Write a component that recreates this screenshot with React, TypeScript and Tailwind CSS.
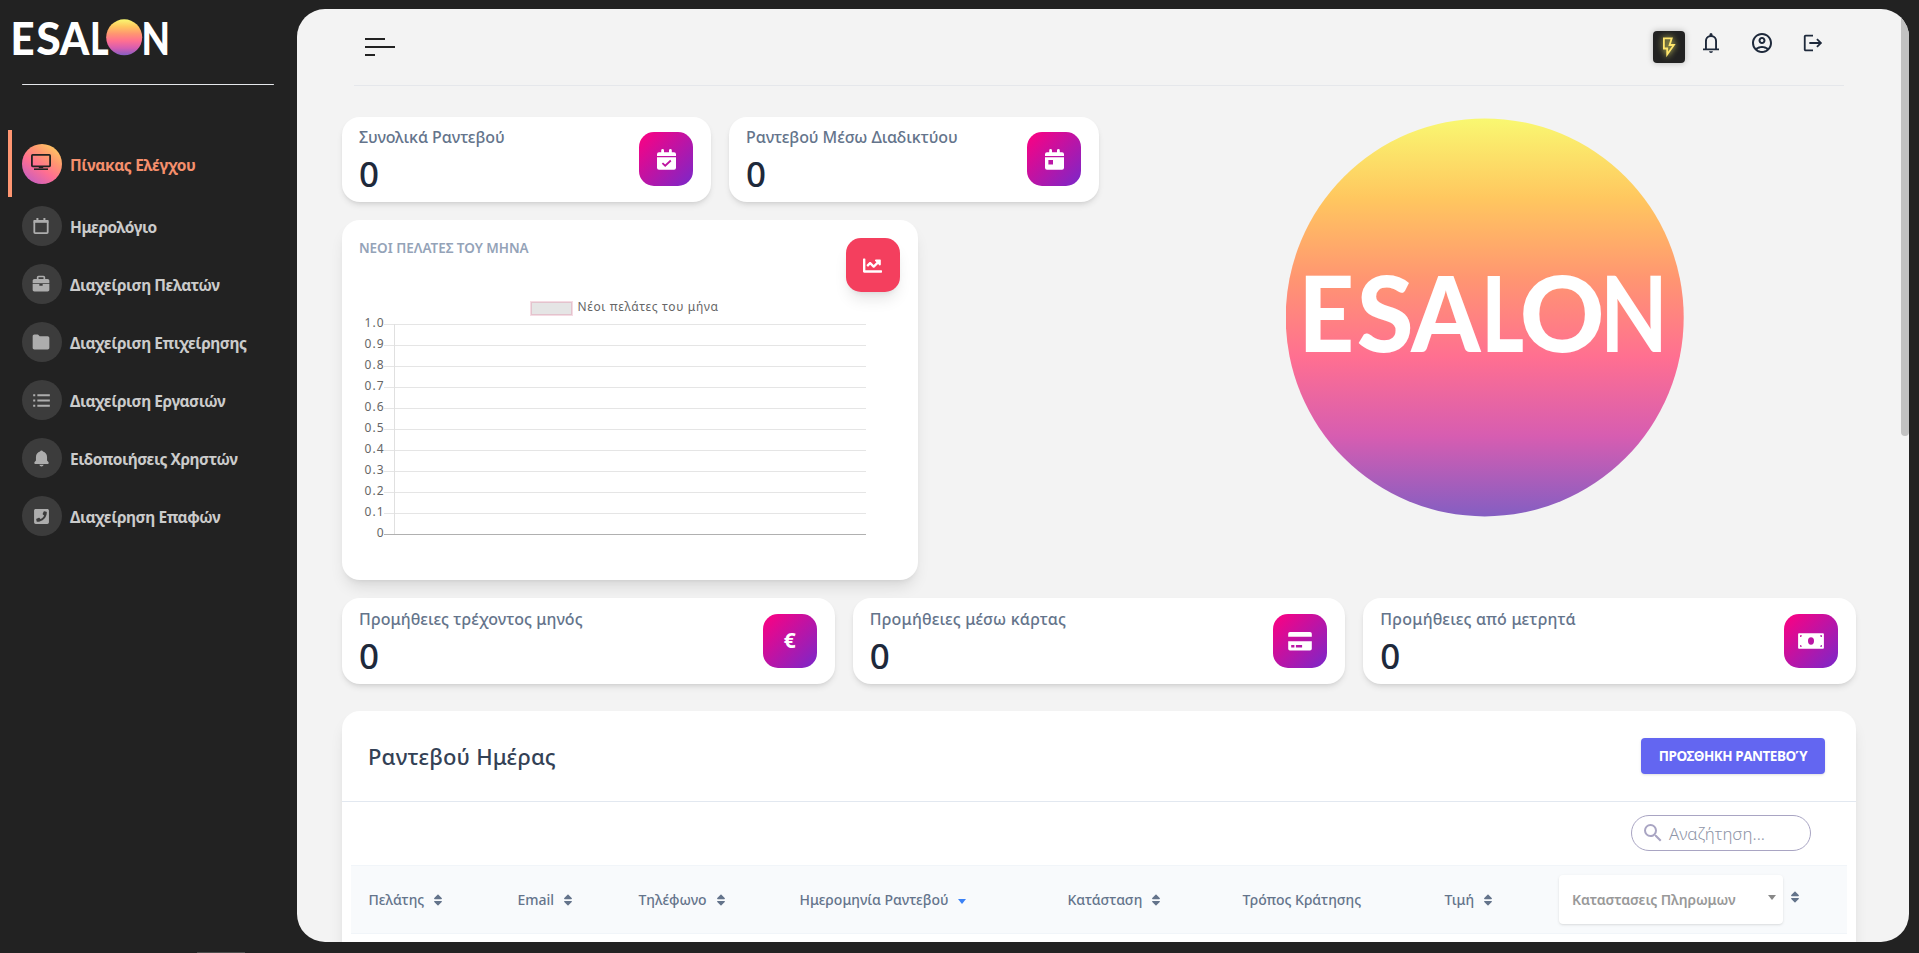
import React from "react";
import { BiSolidBriefcase, BiSolidFolder, BiListUl, BiSolidBell } from "react-icons/bi";
import { FaChartLine, FaPhoneSquare, FaSort } from "react-icons/fa";
import { MdLogout, MdOutlineAccountCircle, MdSearch } from "react-icons/md";

/* ---------- brand mark ---------- */

type Glyph = { ch: string; x: number; w: number; weight: number };

const measurer = document.createElement("canvas").getContext("2d")!;

/** Sets one letter so that its ink spans exactly w by h, with its foot on the baseline. */
function LogoGlyph({ glyph, h, baseline }: { glyph: Glyph; h: number; baseline: number }) {
  measurer.font = `${glyph.weight} 100px Lato`;
  const m = measurer.measureText(glyph.ch);
  const ink = m.actualBoundingBoxRight + m.actualBoundingBoxLeft;
  const sx = glyph.w / ink;
  const sy = h / measurer.measureText("E").actualBoundingBoxAscent;
  const tx = glyph.x + m.actualBoundingBoxLeft * sx;
  return (
    <text transform={`translate(${tx} ${baseline}) scale(${sx} ${sy})`} fontFamily="Lato, sans-serif" fontWeight={glyph.weight} fontSize={100} fill="#fff">
      {glyph.ch}
    </text>
  );
}

function SunGradient({ id }: { id: string }) {
  return (
    <linearGradient id={id} x1="0" y1="0" x2="0" y2="1">
      <stop offset="0" stopColor="#f9f871" />
      <stop offset="0.2" stopColor="#ffc75f" />
      <stop offset="0.4" stopColor="#ff9671" />
      <stop offset="0.6" stopColor="#ff6f91" />
      <stop offset="0.8" stopColor="#d65db1" />
      <stop offset="1" stopColor="#845ec2" />
    </linearGradient>
  );
}

const bigGlyphs: Glyph[] = [
  { ch: "E", x: 19.4, w: 45.5, weight: 900 },
  { ch: "S", x: 71.7, w: 52.6, weight: 900 },
  { ch: "A", x: 124.3, w: 71.9, weight: 900 },
  { ch: "L", x: 201.2, w: 35.8, weight: 900 },
  { ch: "O", x: 236.8, w: 78.4, weight: 900 },
  { ch: "N", x: 321, w: 53.8, weight: 700 },
];

function BigLogo() {
  return (
    <svg width="399" height="399" viewBox="0 0 399 399">
      <defs><SunGradient id="sun-big" /></defs>
      <circle cx="198.700" cy="199.400" r="199" fill="url(#sun-big)" />
      {bigGlyphs.map((g) => <LogoGlyph key={g.ch} glyph={g} h={75.3} baseline={233.8} />)}
    </svg>
  );
}

const smallGlyphs: Glyph[] = [
  { ch: "E", x: 9.5, w: 19.7, weight: 900 },
  { ch: "S", x: 32.6, w: 22.7, weight: 900 },
  { ch: "A", x: 55.3, w: 30.8, weight: 900 },
  { ch: "L", x: 88.6, w: 15.7, weight: 900 },
  { ch: "N", x: 140, w: 23.2, weight: 900 },
];

function SmallLogo() {
  return (
    <svg width="180" height="58" viewBox="0 0 180 58" className="overflow-visible">
      <defs><SunGradient id="sun-small" /></defs>
      {smallGlyphs.map((g) => <LogoGlyph key={g.ch} glyph={g} h={32.6} baseline={45.8} />)}
      <circle cx="120.2" cy="28.3" r="18" fill="url(#sun-small)" />
    </svg>
  );
}

/* ---------- icons ---------- */

const MonitorIcon = () => (
  <svg width="20" height="17" viewBox="0 0 20 17" fill="none" stroke="currentColor">
    <rect x="0.9" y="0.9" width="18.2" height="11.4" rx="0.8" strokeWidth="1.8" />
    <path d="M7.8 13.5h4.4" strokeWidth="1.4" />
    <path d="M3 15.2h14" strokeWidth="1.6" />
  </svg>
);

const CalendarIcon = () => (
  <svg width="16" height="16" viewBox="0 0 16 16" fill="none" stroke="currentColor">
    <rect x="1.3" y="2.9" width="13.4" height="12.2" rx="0.8" strokeWidth="1.8" />
    <path d="M0.6 3.4h14.8" strokeWidth="2.8" />
    <path d="M4.4 0v2.6M11.4 0v2.6" strokeWidth="2" />
  </svg>
);

const CalendarBlock = ({ check }: { check: boolean }) => (
  <svg width="19" height="21" viewBox="0 0 19 21" fill="#fff">
    <path d="M2 3.2h2.2V1.4a1.3 1.3 0 0 1 2.8 0v1.8h5V1.4a1.3 1.3 0 0 1 2.8 0v1.8H17a2 2 0 0 1 2 2v1.9H0V5.2a2 2 0 0 1 2-2z" />
    <path fillRule="evenodd" d={check ? "M0 8.200h19v10.600a2 2 0 0 1-2 2H2a2 2 0 0 1-2-2z" : "M0 8.200h19v10.600a2 2 0 0 1-2 2H2a2 2 0 0 1-2-2zM3.400 11v4.600H8V11z"} />
    {check && <path d="M5.400 14.100l2.800 2.600 5.600-5.200" fill="none" stroke="#be129f" strokeWidth="1.8" />}
  </svg>
);

const CardIcon = () => (
  <svg width="24" height="19" viewBox="0 0 24 19" fill="#fff">
    <path d="M2 0h20a1.800 1.800 0 0 1 1.800 1.800V4.800H.2V1.800A1.800 1.800 0 0 1 2 0z" />
    <path fillRule="evenodd" d="M.2 9.200h23.600v7.600a1.800 1.800 0 0 1-1.800 1.800H2a1.800 1.800 0 0 1-1.800-1.800zM3.200 13v2.600h3.200V13zM7.900 13v2.600h6.200V13z" />
  </svg>
);

const BillIcon = () => (
  <svg width="26" height="16" viewBox="0 0 26 16">
    <path fill="#fff" fillRule="evenodd" d="M1 .3h24a.9.9 0 0 1 .9.9v13.600a.9.9 0 0 1-.9.9H1a.9.9 0 0 1-.9-.9V1.200A.9.9 0 0 1 1 .3zM13 4.300a3 3.700 0 1 0 0 7.400a3 3.700 0 1 0 0-7.400zM2 2.200v1.900a1.900 1.900 0 0 0 1.900-1.900zM24 2.200h-1.900a1.900 1.900 0 0 0 1.900 1.900zM2 13.800h1.900a1.900 1.900 0 0 0-1.900-1.900zM24 13.800v-1.900a1.900 1.900 0 0 0-1.900 1.900z" />
  </svg>
);

const BoltIcon = () => (
  <svg width="14" height="21" viewBox="0 0 14 21" fill="none" stroke="#ffe66b" strokeWidth="1.8" className="drop-shadow-[0_0_3px_#f9f871]">
    <path d="M1.900 1.300h7.800L7.600 8h4.300L5.200 17.500V11.500H1.900z" />
  </svg>
);

const BellIcon = () => (
  <svg width="16" height="20" viewBox="0 0 16 20" fill="currentColor">
    <path fillRule="evenodd" d="M0 17.300v-1.900h2V8a5.800 5.800 0 0 1 1.250-3.690A5.700 5.700 0 0 1 6.500 2.200V1.500a1.500 1.500 0 0 1 3 0v.7a5.700 5.700 0 0 1 3.250 2.110A5.800 5.800 0 0 1 14 8v7.400h2v1.900zM8 20a2 2 0 0 1-2-1.800h4a2 2 0 0 1-2 1.800zM3.900 15.400h8.200V8a4.100 4.100 0 0 0-8.200 0z" />
  </svg>
);

/* ---------- sidebar ---------- */

const navItems = [
  { label: "Ημερολόγιο", icon: <CalendarIcon /> },
  { label: "Διαχείριση Πελατών", icon: <BiSolidBriefcase size={20} /> },
  { label: "Διαχείριση Επιχείρησης", icon: <BiSolidFolder size={20} /> },
  { label: "Διαχείριση Εργασιών", icon: <BiListUl size={25} /> },
  { label: "Ειδοποιήσεις Χρηστών", icon: <BiSolidBell size={19} /> },
  { label: "Διαχείρηση Επαφών", icon: <FaPhoneSquare size={17} /> },
];

function Sidebar() {
  return (
    <aside className="flex h-[953px] w-[297px] shrink-0 flex-col">
      <div className="h-[84px] pl-1 pt-[9px]"><SmallLogo /></div>
      <div className="ml-[22px] h-px w-[252px] shrink-0 rounded-full bg-[#e5e7eb]" />
      <nav className="mt-[45px] flex flex-col">
        <a className="ml-2 flex h-[67px] items-center border-l-4 border-[#ff9671] pl-[10px]">
          <span className="flex size-10 items-center justify-center rounded-full bg-[linear-gradient(215deg,#ffd35f_5%,#ff9671_35%,#ff6f91_58%,#c85fc0_90%)] pb-[2px] pr-[3px] text-[#222]">
            <MonitorIcon />
          </span>
          <span className="pl-2 pt-[4px] text-[15.5px] font-bold tracking-[-0.35px] text-[#f58f6c]">Πίνακας Ελέγχου</span>
        </a>
        <div className="mt-[9px] flex flex-col gap-[18px] pl-[22px]">
          {navItems.map((item) => (
            <a key={item.label} className="flex items-center">
              <span className="flex size-10 items-center justify-center rounded-full bg-[#3c3c3c] pr-[2px] text-[#adadad]">{item.icon}</span>
              <span className="pl-2 pt-[3px] text-[15.5px] font-bold tracking-[-0.45px] text-[#cbcbcb]">{item.label}</span>
            </a>
          ))}
        </div>
      </nav>
      <div className="ml-[197px] mt-auto h-px w-12 bg-[#4d4d4d]" />
    </aside>
  );
}

/* ---------- dashboard ---------- */

function TopBar() {
  return (
    <header className="mx-3 flex h-[77px] items-start justify-between border-b border-[#e5e7eb] pl-[11px] pr-5">
      <div className="flex flex-col gap-[6px] pt-[29px]">
        <span className="h-[2px] w-5 bg-[#222]" />
        <span className="h-[2px] w-[30px] bg-[#222]" />
        <span className="h-[2px] w-[10px] bg-[#222]" />
      </div>
      <div className="flex items-start text-[#1e293b]">
        <span className="mt-[22px] flex size-8 items-center justify-center rounded bg-[#222] shadow-[0_0_6px_rgba(0,0,0,0.25)]"><BoltIcon /></span>
        <span className="ml-[18px] mt-[24px]"><BellIcon /></span>
        <MdOutlineAccountCircle className="ml-[31px] mt-[22px]" size={24} />
        <MdLogout className="ml-[28px] mt-[23px]" size={22} />
      </div>
    </header>
  );
}

function StatCard({ title, icon, className }: { title: string; icon: React.ReactNode; className: string }) {
  return (
    <div className={`flex items-start justify-between rounded-[18px] bg-white pl-[17px] pr-[18px] shadow-md ${className}`}>
      <div className="-mt-[7px] flex flex-col">
        <span className="text-base font-medium leading-6 text-[#64748b]">{title}</span>
        <span className="mt-[3px] text-[35px] font-medium leading-[43px] tracking-normal text-[#1e293b]">0</span>
      </div>
      <div className="flex size-[54px] items-center justify-center rounded-[15px] bg-[linear-gradient(135deg,#ff0080,#7928ca)] text-white">{icon}</div>
    </div>
  );
}

const ticks = ["1.0", "0.9", "0.8", "0.7", "0.6", "0.5", "0.4", "0.3", "0.2", "0.1", "0"];

function ChartCard() {
  return (
    <section className="h-[360px] w-[576px] rounded-[18px] bg-white shadow-lg">
      <div className="flex h-[78px] items-start justify-between pl-[17px] pr-[18px] pt-[18px]">
        <h2 className="text-[13.5px] font-semibold leading-5 tracking-[-0.03px] text-[#94a3b8]">ΝΕΟΙ ΠΕΛΑΤΕΣ ΤΟΥ ΜΗΝΑ</h2>
        <div className="flex size-[54px] items-center justify-center rounded-[15px] bg-[#f43f5e] pr-[2px] text-white shadow-lg"><FaChartLine size={19} /></div>
      </div>
      <svg width="576" height="260" viewBox="0 0 576 260" fontFamily="'Noto Sans', sans-serif" fontSize="12" fill="#666">
        <rect x="189.500" y="4.500" width="40" height="12" fill="#e5e5e5" stroke="#f5dbe3" strokeWidth="3" />
        <rect x="189.500" y="4.500" width="40" height="12" fill="#e5e5e5" stroke="#e3c3cd" strokeWidth="1" />
        <text x="235.500" y="13" letterSpacing="0.65">Νέοι πελάτες του μήνα</text>
        {ticks.map((t, i) => {
          const y = 26.5 + i * 21;
          return (
            <g key={t}>
              <text x="42.5" y={y + 2.5} textAnchor="end" letterSpacing="1">{t}</text>
              <path d={`M42 ${y}H524`} stroke={t === "0" ? "#b0b0b0" : "#e5e5e5"} />
            </g>
          );
        })}
        <path d="M52.500 26V236" stroke="#e0e0e0" />
      </svg>
    </section>
  );
}

const columns = [
  { label: "Πελάτης", width: "w-[149px]", sort: "both" },
  { label: "Email", width: "w-[121px]", sort: "both" },
  { label: "Τηλέφωνο", width: "w-[161px]", sort: "both" },
  { label: "Ημερομηνία Ραντεβού", width: "w-[268px]", sort: "down" },
  { label: "Κατάσταση", width: "w-[175px]", sort: "both" },
  { label: "Τρόπος Κράτησης", width: "w-[202px]", sort: "none" },
  { label: "Τιμή", width: "w-[114px]", sort: "both" },
];

function Appointments() {
  return (
    <section className="mt-[27px] h-[260px] rounded-t-[18px] bg-white shadow-lg">
      <div className="flex h-[91px] items-center justify-between border-b border-[#e2e8f0] pl-[26px] pr-[31px]">
        <h2 className="text-[22px] font-medium tracking-[0.2px] text-[#334155]">Ραντεβού Ημέρας</h2>
        <button className="h-9 w-[184px] rounded bg-[#6366f1] text-[13.5px] font-bold tracking-[-0.45px] text-white shadow-sm">ΠΡΟΣΘΗΚΗ ΡΑΝΤΕΒΟΎ</button>
      </div>
      <div className="flex justify-end pr-[45px] pt-[13px]">
        <div className="flex h-9 w-[180px] items-center rounded-full border border-[#a9a5c3] pl-[9px]">
          <MdSearch size={24} className="text-[#a9a5c3]" />
          <span className="pl-1 pt-px text-[17px] font-light text-[#8f96a8]">Αναζήτηση...</span>
        </div>
      </div>
      <div className="mx-[9px] mt-[14px] flex h-[69px] items-center border-y border-[#f1f5f9] bg-[#f8fafc] text-[#64748b]">
        {columns.map((c) => (
          <div key={c.label} className={`${c.width} flex shrink-0 items-center whitespace-nowrap pl-[17.5px] pt-px text-sm font-medium`}>
            {c.label}
            {c.sort === "both" && <FaSort size={14} className="mb-px ml-[7px]" />}
            {c.sort === "down" && <span className="ml-[9px] mt-[3px] border-x-[4.5px] border-t-[5px] border-x-transparent border-t-[#3b82f6]" />}
          </div>
        ))}
        <div className="ml-[18px] flex h-[49px] w-[224px] shrink-0 items-center justify-between rounded bg-white pl-[13px] pr-[7px] text-sm font-semibold tracking-[-0.1px] text-[#999] shadow">
          Καταστασεις Πληρωμων
          <span className="mb-[5px] border-x-4 border-t-[5px] border-x-transparent border-t-[#888]" />
        </div>
        <FaSort size={14} className="mb-[6px] ml-[5px]" />
      </div>
    </section>
  );
}

export default function App() {
  return (
    <div className="flex h-[953px] w-[1919px] overflow-hidden bg-[#222] font-['Noto_Sans',sans-serif]">
      <Sidebar />
      <main className="mt-[9px] flex h-[933px] w-[1612px] shrink-0 overflow-hidden rounded-[28px] bg-[#f3f3f3]">
        <div className="w-[1604px] px-[45px]">
          <TopBar />
          <div className="mt-[31px] flex h-[463px]">
            <div className="flex w-[757px] flex-col gap-[18px]">
              <div className="flex gap-[18px]">
                <StatCard className="h-[85px] w-[369px] pt-[15px] tracking-[-0.08px]" title="Συνολικά Ραντεβού" icon={<CalendarBlock check />} />
                <StatCard className="h-[85px] w-[370px] pt-[15px] tracking-[-0.08px]" title="Ραντεβού Μέσω Διαδικτύου" icon={<CalendarBlock check={false} />} />
              </div>
              <ChartCard />
            </div>
            <div className="ml-[187px] mt-px"><BigLogo /></div>
          </div>
          <div className="mt-[18px] flex h-[86px] gap-[18px]">
            <StatCard className="h-[86px] flex-1 pt-4 tracking-[0.08px]" title="Προμήθειες τρέχοντος μηνός" icon={<span className="text-[21px] font-bold">€</span>} />
            <StatCard className="h-[86px] flex-1 pt-4 tracking-[0.2px]" title="Προμήθειες μέσω κάρτας" icon={<CardIcon />} />
            <StatCard className="h-[86px] flex-1 pt-4 tracking-[0.2px]" title="Προμήθειες από μετρητά" icon={<BillIcon />} />
          </div>
          <Appointments />
        </div>
        <div className="h-[427px] w-2 rounded-b-full bg-[#c1c1c1]" />
      </main>
    </div>
  );
}
